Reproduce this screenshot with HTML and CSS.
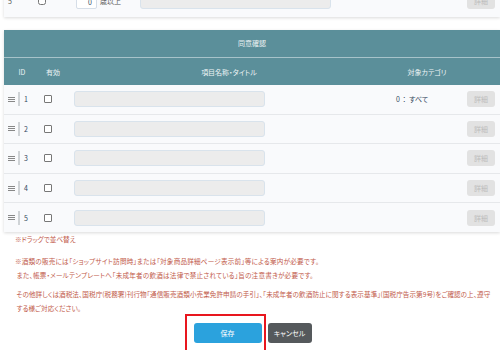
FILE: index.html
```html
<!DOCTYPE html>
<html lang="ja">
<head>
  <meta charset="UTF-8" />
  <title>同意確認</title>
  <link rel="stylesheet" href="styles.css">
</head>
<body>
  <div class="card top-card">
    <div class="top-row">
      <span class="top-id">5</span>
      <input type="checkbox" class="check top-check" />
      <span class="age-box">0</span>
      <span class="age-label">歳以上</span>
      <span class="text-box top-text"></span>
      <span class="detail-btn top-btn">詳細</span>
    </div>
  </div>

  <div class="card table-card">
    <div class="head-title">同意確認</div>
    <div class="row head-row">
      <div class="c-id">ID</div>
      <div class="c-on">有効</div>
      <div class="c-title">項目名称・タイトル</div>
      <div class="c-cat">対象カテゴリ</div>
      <div class="c-btn"></div>
    </div>
    <div class="row body-row">
      <div class="c-id"><span class="handle"></span><span class="bar"></span>1</div>
      <div class="c-on"><span class="check"></span></div>
      <div class="c-title"><span class="text-box"></span></div>
      <div class="c-cat"><span class="cat-text">0 ： すべて</span></div>
      <div class="c-btn"><span class="detail-btn">詳細</span></div>
    </div>
    <div class="row body-row">
      <div class="c-id"><span class="handle"></span><span class="bar"></span>2</div>
      <div class="c-on"><span class="check"></span></div>
      <div class="c-title"><span class="text-box"></span></div>
      <div class="c-cat"></div>
      <div class="c-btn"><span class="detail-btn">詳細</span></div>
    </div>
    <div class="row body-row">
      <div class="c-id"><span class="handle"></span><span class="bar"></span>3</div>
      <div class="c-on"><span class="check"></span></div>
      <div class="c-title"><span class="text-box"></span></div>
      <div class="c-cat"></div>
      <div class="c-btn"><span class="detail-btn">詳細</span></div>
    </div>
    <div class="row body-row">
      <div class="c-id"><span class="handle"></span><span class="bar"></span>4</div>
      <div class="c-on"><span class="check"></span></div>
      <div class="c-title"><span class="text-box"></span></div>
      <div class="c-cat"></div>
      <div class="c-btn"><span class="detail-btn">詳細</span></div>
    </div>
    <div class="row body-row last">
      <div class="c-id"><span class="handle"></span><span class="bar"></span>5</div>
      <div class="c-on"><span class="check"></span></div>
      <div class="c-title"><span class="text-box"></span></div>
      <div class="c-cat"></div>
      <div class="c-btn"><span class="detail-btn">詳細</span></div>
    </div>
  </div>

  <p class="note drag-note">※ドラッグで並べ替え</p>

  <p class="note">※酒類の販売には「ショップサイト訪問時」または「対象商品詳細ページ表示前」等による案内が必要です。<br>
  &nbsp;また、帳票・メールテンプレートへ「未成年者の飲酒は法律で禁止されている」旨の注意書きが必要です。</p>
  <p class="note note-more">&nbsp;その他詳しくは酒税法、国税庁(税務署)刊行物「通信販売酒類小売業免許申請の手引」、「未成年者の飲酒防止に関する表示基準」(国税庁告示第9号)をご確認の上、遵守<br>
  &nbsp;する様ご対応ください。</p>

  <div class="actions">
    <div class="focus-frame">
      <button class="btn btn-save">保存</button>
    </div>
    <button class="btn btn-cancel">キャンセル</button>
  </div>
</body>
</html>
```

FILE: styles.css
```css
body {
  margin: 0;
  padding-left: 4px;
  background: #ffffff;
  font-family: "Noto Sans CJK JP", "Noto Sans", sans-serif;
  font-feature-settings: "palt";
  font-size: 7px;
  color: #34495e;
  overflow: hidden;
}
.card {
  background: #f9fafc;
  box-shadow: 0 1px 3px rgba(0, 0, 0, 0.15);
}
.top-card {
  margin-top: -13px;
  height: 30px;
}
.top-row {
  display: flex;
  align-items: center;
  height: 28px;
}
.top-id {
  width: 26px;
  padding-left: 4px;
  color: #555555;
}
.top-check {
  margin: 0 30px 0 0;
  width: 8px;
  height: 8px;
}
.age-box {
  box-sizing: border-box;
  width: 21px;
  height: 16px;
  padding: 3px 4px 0 0;
  text-align: right;
  background: #ffffff;
  border: 1px solid #d6dee8;
  border-radius: 2px;
}
.age-label {
  margin-left: 3px;
  width: 40px;
  color: #555555;
}
.top-text {
  width: 191px;
}
.top-btn {
  margin-left: auto;
  margin-right: 5px;
}
.table-card {
  margin-top: 13px;
}
.head-title {
  background: #5b8f9a;
  color: #eef4f5;
  height: 27px;
  line-height: 27px;
  text-align: center;
  border-bottom: 1px solid #a7c3ca;
}
.row {
  display: grid;
  grid-template-columns: 36px 26px 326px 70px 1fr;
  align-items: center;
}
.head-row {
  background: #5b8f9a;
  color: #eef4f5;
  height: 27px;
}
.head-row div {
  text-align: center;
}
.body-row {
  height: 28.6px;
  border-bottom: 1px solid #e6e8eb;
}
.body-row.last {
  border-bottom: none;
}
.c-id {
  display: flex;
  align-items: center;
}
.head-row .c-id {
  justify-content: center;
}
.body-row .c-id {
  padding-left: 4px;
}
.handle {
  width: 7px;
  height: 5px;
  border-top: 1px solid #888888;
  border-bottom: 1px solid #888888;
  background: linear-gradient(#888888, #888888) center / 100% 1px no-repeat;
  box-sizing: border-box;
}
.bar {
  width: 2px;
  height: 14px;
  background: #cfd3d6;
  margin: 0 4px 0 3px;
}
.check {
  display: block;
  box-sizing: border-box;
  width: 8px;
  height: 8px;
  border: 1px solid #777777;
  border-radius: 1px;
  background: #ffffff;
  margin-left: 4px;
}
.text-box {
  display: block;
  box-sizing: border-box;
  width: 191px;
  height: 16px;
  background: #ececec;
  border: 1px solid #d9e3ec;
  border-radius: 3px;
  margin-left: 8px;
}
.top-row .text-box {
  margin-left: 0;
}
.body-row .c-cat {
  padding-left: 4px;
}
.cat-text {
  font-feature-settings: normal;
  letter-spacing: -0.3px;
}
.detail-btn {
  display: block;
  box-sizing: border-box;
  width: 28px;
  height: 16px;
  line-height: 16px;
  text-align: center;
  background: #e2e2e2;
  color: #bcbcbc;
  border-radius: 3px;
}
.body-row .detail-btn {
  margin-left: 5px;
}
.note {
  margin: 0;
  padding-left: 11px;
  color: #bf5a4a;
  font-size: 6.6px;
  line-height: 13.5px;
}
.drag-note {
  margin-top: 1px;
  margin-bottom: 9px;
}
.note-more {
  margin-top: 6px;
  letter-spacing: 0.05px;
}
.note:not(.drag-note):not(.note-more) {
  letter-spacing: 0.2px;
}
.actions {
  display: flex;
  justify-content: center;
  align-items: flex-start;
  margin-top: -1px;
  padding-right: 8px;
}
.focus-frame {
  border: 2px solid #e8161e;
  padding: 7px 2px 10px 7px;
  margin-right: 2px;
}
.btn {
  height: 20px;
  border: none;
  border-radius: 3px;
  color: #ffffff;
  font-family: "Noto Sans CJK JP", sans-serif;
  font-feature-settings: "palt";
  font-size: 7px;
  padding: 0;
  cursor: pointer;
}
.btn-save {
  display: block;
  width: 68px;
  background: #2ba2dd;
}
.btn-cancel {
  width: 44px;
  margin-top: 9px;
  background: #55595c;
}
```
